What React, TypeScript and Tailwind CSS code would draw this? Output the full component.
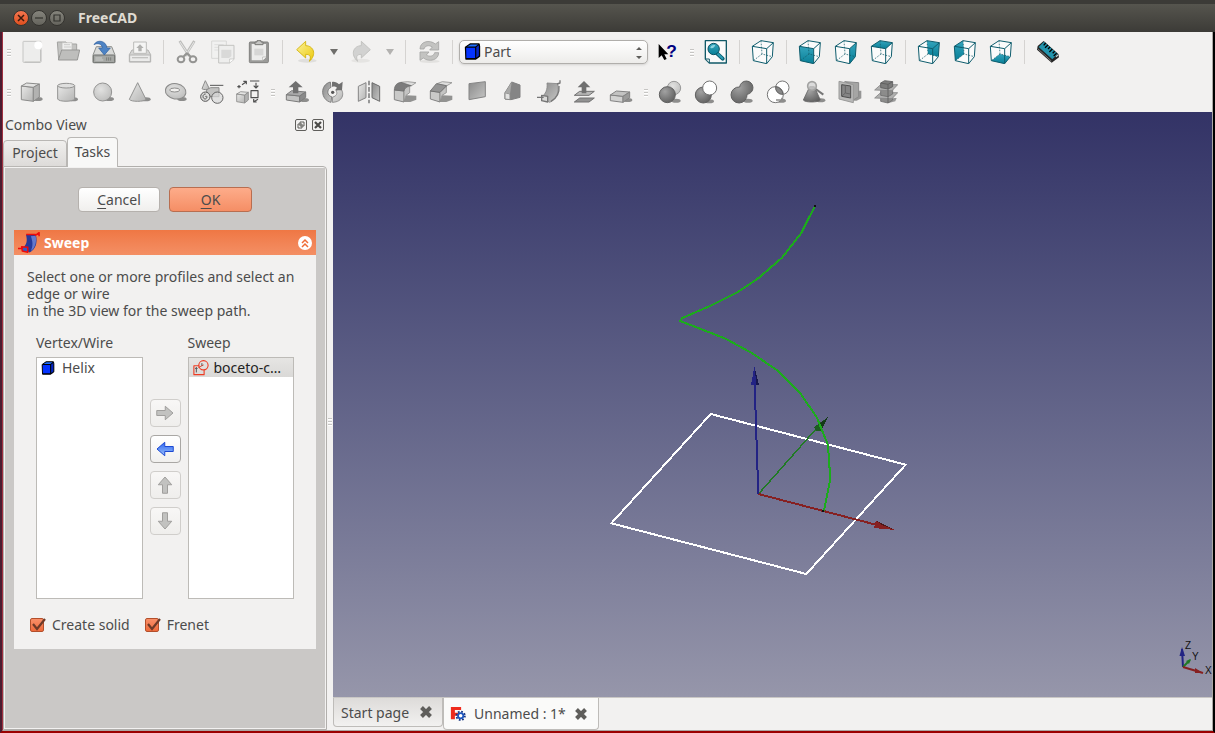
import React from 'react';

type IconProps = { children: React.ReactNode; className?: string };

function Icon({ children, className = 'size-6' }: IconProps) {
  return (
    <svg viewBox="0 0 72 72" className={`${className} shrink-0`} aria-hidden="true" strokeLinejoin="round">
      {children}
    </svg>
  );
}

// Gradients shared by all the toolbar drawings
function SharedDefs() {
  return (
    <svg className="absolute size-0" aria-hidden="true">
      <defs>
        <linearGradient id="light" x1="0" y1="0" x2="1" y2="1">
          <stop offset="0" stopColor="#e8e8e7" />
          <stop offset="1" stopColor="#b4b4b3" />
        </linearGradient>
        <linearGradient id="mid" x1="0" y1="0" x2="1" y2="1">
          <stop offset="0" stopColor="#8a8a8a" />
          <stop offset="1" stopColor="#c6c6c5" />
        </linearGradient>
        <radialGradient id="dark" cx="0.35" cy="0.3" r="0.8">
          <stop offset="0" stopColor="#a2a2a2" />
          <stop offset="1" stopColor="#5c5c5c" />
        </radialGradient>
        <radialGradient id="ball" cx="0.4" cy="0.35" r="0.7">
          <stop offset="0" stopColor="#e2e2e1" />
          <stop offset="1" stopColor="#bdbdbc" />
        </radialGradient>
        <linearGradient id="teal" x1="0" y1="0" x2="0" y2="1">
          <stop offset="0" stopColor="#35a5bd" />
          <stop offset="1" stopColor="#087f97" />
        </linearGradient>
        <linearGradient id="gold" x1="0" y1="0" x2="1" y2="1">
          <stop offset="0" stopColor="#fbf29a" />
          <stop offset="1" stopColor="#ecc90b" />
        </linearGradient>
        <linearGradient id="blueArrow" x1="0" y1="0" x2="0" y2="1">
          <stop offset="0" stopColor="#9cc2fb" />
          <stop offset="1" stopColor="#2a63f0" />
        </linearGradient>
      </defs>
    </svg>
  );
}

const Shadow = ({ x, y }: { x: number; y: number }) => <ellipse cx={x} cy={y} rx="14" ry="6" fill="#8d8d8c" />;

const cubeFaces: Record<string, string> = {
  front: '4,19 47,26 47,71 7,62',
  right: '47,26 67,8 64,50 47,71',
  top: '4,19 30,2 67,8 47,26',
  rear: '30,2 67,8 64,50 33,42',
  left: '4,19 30,2 33,42 7,62',
  bottom: '7,62 33,42 64,50 47,71',
};

function ViewCube({ face }: { face?: string }) {
  return (
    <Icon>
      <polygon points="4,19 30,2 67,8 64,50 47,71 7,62" fill="#fbfbfb" />
      {face && <polygon points={cubeFaces[face]} fill="url(#teal)" />}
      <path d="M30 2L33 42L64 50M33 42L7 62" fill="none" stroke="#125a68" strokeWidth="2.2" strokeDasharray="5 4" />
      <path
        d="M4 19L30 2L67 8L64 50L47 71L7 62ZM4 19L47 26L67 8M47 26V71"
        fill="none"
        stroke="#0f5d6d"
        strokeWidth="3"
      />
    </Icon>
  );
}

function BlueCube({ className }: { className?: string }) {
  return (
    <Icon className={className}>
      <path d="M6 18L26 4H64L66 14V56L50 68H8Z" fill="#000" stroke="#000" strokeWidth="5" />
      <path d="M9 20H47V63H10Z" fill="#0433ff" />
      <path d="M13 15L28 6H60L48 15Z" fill="#1c6dff" />
      <path d="M52 18L63 10V54L52 62Z" fill="#0426c5" />
    </Icon>
  );
}

const NewIcon = () => (
  <Icon>
    <rect x="9" y="4" width="54" height="63" rx="2" fill="#ededec" stroke="#c6c6c4" strokeWidth="3" />
    <path d="M14 66h46M62 30v34" stroke="#b0b0ae" strokeWidth="2" />
    <circle cx="55" cy="16" r="12" fill="#fff" />
  </Icon>
);
const OpenIcon = () => (
  <Icon>
    <path d="M4 6H30L34 12H62V58H8Z" fill="#c4c4c2" stroke="#a3a3a1" strokeWidth="3" />
    <path d="M18 8H48V36H18Z" fill="#efefee" stroke="#bcbcba" strokeWidth="2" />
    <path d="M24 14H42M24 21H46" stroke="#cdcdcb" strokeWidth="3" />
    <path d="M17 30H71L64 60H7Z" fill="#bebebc" stroke="#979795" strokeWidth="3" />
  </Icon>
);
const SaveIcon = () => (
  <Icon>
    <path d="M13 20H59L69 45V68H3V45Z" fill="#d9dad8" stroke="#8c8e8b" strokeWidth="3" />
    <rect x="4" y="45" width="64" height="23" rx="3" fill="#a5a7a4" stroke="#6f716e" strokeWidth="3" />
    <path d="M10 60H34M10 54H30" stroke="#d0d1cf" strokeWidth="3" />
    <path d="M44 52v10M50 52v10M56 52v10" stroke="#7c7e7b" strokeWidth="3" />
    <path d="M6 14C14 -2 42 0 45 24H55L37 45L20 24H31C30 11 16 8 6 14Z" fill="#4d83c4" stroke="#2d5e9e" strokeWidth="2" />
  </Icon>
);
const PrintIcon = () => (
  <Icon>
    <path d="M12 30H60L68 44V66H4V44Z" fill="#d5d5d4" stroke="#b1b1af" strokeWidth="3" />
    <path d="M17 6H55V40H17Z" fill="#f5f5f4" stroke="#bcbcba" strokeWidth="3" />
    <path d="M36 13L47 24H41V34H31V24H25Z" fill="#b1b1af" />
    <path d="M5 45H67V65H5Z" fill="#ebebea" stroke="#b4b4b2" strokeWidth="3" />
    <path d="M12 53H60" stroke="#c2c2c0" strokeWidth="4" />
  </Icon>
);
const CutIcon = () => (
  <Icon>
    <path d="M14 3L43 48M58 3L30 48" stroke="#bdbdbb" strokeWidth="8" />
    <path d="M15 6L42 46M57 6L32 46" stroke="#e7e7e6" strokeWidth="3" />
    <ellipse cx="18" cy="58" rx="10" ry="9" fill="none" stroke="#949492" strokeWidth="6" />
    <ellipse cx="54" cy="58" rx="10" ry="9" fill="none" stroke="#949492" strokeWidth="6" />
    <path d="M24 51L36 40L48 51" fill="none" stroke="#949492" strokeWidth="6" />
  </Icon>
);
const CopyIcon = () => (
  <Icon>
    <rect x="2" y="3" width="44" height="52" fill="#f1f1f0" stroke="#d8d8d6" strokeWidth="3" />
    <path d="M10 14H38M10 22H38M10 30H24" stroke="#dededd" strokeWidth="3" />
    <path d="M23 16H69V58L56 69H23Z" fill="#eeeeed" stroke="#c3c3c1" strokeWidth="3" />
    <path d="M31 29H61V49L54 54H31Z" fill="#d9d9d8" />
    <path d="M56 69V57H69" fill="#fff" stroke="#bcbcba" strokeWidth="2" />
  </Icon>
);
const PasteIcon = () => (
  <Icon>
    <rect x="7" y="6" width="57" height="62" rx="3" fill="#9b9b99" stroke="#80807e" strokeWidth="3" />
    <path d="M14 12H57V52L47 61H14Z" fill="#ececeb" />
    <path d="M22 26H49V46H22Z" fill="#d6d6d5" />
    <path d="M47 61V51H57" fill="#fff" stroke="#aaaaa8" strokeWidth="2" />
    <path d="M24 14V6H30V2H42V6H48V14Z" fill="#c5c5c3" stroke="#777775" strokeWidth="3" />
  </Icon>
);
const UndoIcon = () => (
  <Icon>
    <ellipse cx="40" cy="62" rx="28" ry="6" fill="#dfdedc" />
    <path d="M8 29L35 4V17C59 17 69 44 46 64C53 48 47 43 35 43V54Z" fill="url(#gold)" stroke="#d1b000" strokeWidth="2.5" />
  </Icon>
);
const RedoIcon = () => (
  <Icon>
    <ellipse cx="32" cy="62" rx="28" ry="6" fill="#e5e4e2" />
    <path d="M61 29L34 4V17C10 17 0 44 23 64C16 48 22 43 34 43V54Z" fill="#d2d2d1" stroke="#bdbdbb" strokeWidth="2.5" />
  </Icon>
);
const RefreshIcon = () => (
  <Icon>
    <ellipse cx="38" cy="64" rx="30" ry="5" fill="#e2e1df" />
    <g fill="#c3c3c1" stroke="#a5a5a3" strokeWidth="2.5">
      <path d="M9 27C9 4 38 -2 55 12L65 5V30H38L46 21C36 14 23 17 21 27Z" />
      <path d="M65 38C65 61 36 67 19 54L9 61V36H36L28 45C38 52 51 48 53 38Z" />
    </g>
  </Icon>
);
const WhatsThisIcon = () => (
  <Icon>
    <path d="M11 12V54L20 46L28 60L35 57L28 43H40Z" fill="#000" />
    <text x="34" y="51" fontSize="52" fontWeight="700" fill="#000080" fontFamily="Liberation Sans, sans-serif">
      ?
    </text>
  </Icon>
);
const FitIcon = () => (
  <Icon>
    <path d="M4 2H67V69H16L4 57Z" fill="#fafafa" stroke="#125a68" strokeWidth="4" />
    <path d="M4 57H16V69Z" fill="#fff" stroke="#125a68" strokeWidth="3" />
    <path d="M39 40L56 56" stroke="#0a6073" strokeWidth="12" strokeLinecap="round" />
    <path d="M39 40L55 55" stroke="#2a9db5" strokeWidth="6" strokeLinecap="round" />
    <circle cx="29" cy="27" r="17" fill="url(#teal)" stroke="#0b5162" strokeWidth="3" />
    <path d="M19 24C20 16 28 14 34 16C30 24 26 26 19 24Z" fill="#8ed4e0" />
  </Icon>
);
const RulerIcon = () => (
  <Icon>
    <path d="M23 3L67 42L69 52L47 68L3 29L5 18Z" fill="#242424" />
    <path d="M24 5L65 42L49 58L8 21Z" fill="#2294ad" />
    <path d="M29 9L23 16M36 15L27 23M42 21L36 27M49 27L40 36M56 34L50 40M62 40L53 48" stroke="#000" strokeWidth="4" />
    <path d="M5 26L46 63" stroke="#777" strokeWidth="3" />
    <path d="M60 50L66 45" stroke="#ccc" strokeWidth="4" />
  </Icon>
);

const BoxIcon = () => (
  <Icon>
    <Shadow x={54} y={57} />
    <g stroke="#8b8b8a" strokeWidth="3">
      <path d="M4 18L40 22V64L4 59Z" fill="url(#light)" />
      <path d="M4 18L20 9L58 12L40 22Z" fill="#e3e3e2" />
      <path d="M40 22L58 12V51L40 64Z" fill="#b2b2b1" />
    </g>
  </Icon>
);
const CylinderIcon = () => (
  <Icon>
    <Shadow x={52} y={58} />
    <path d="M5 17V57C8 66 52 66 56 57V17" fill="url(#light)" stroke="#939392" strokeWidth="3" />
    <ellipse cx="30.500" cy="17" rx="25.500" ry="7" fill="#dfdfde" stroke="#939392" strokeWidth="3" />
  </Icon>
);
const SphereIcon = () => (
  <Icon>
    <Shadow x={52} y={57} />
    <circle cx="32" cy="36" r="27" fill="url(#ball)" stroke="#939392" strokeWidth="3" />
  </Icon>
);
const ConeIcon = () => (
  <Icon>
    <Shadow x={54} y={58} />
    <path d="M29 8L4 58C8 66 50 66 54 58Z" fill="url(#light)" stroke="#939392" strokeWidth="3" />
  </Icon>
);
const TorusIcon = () => (
  <Icon>
    <Shadow x={54} y={57} />
    <ellipse cx="35" cy="34" rx="31" ry="23" fill="url(#ball)" stroke="#8b8b8a" strokeWidth="3" transform="rotate(10 35 34)" />
    <ellipse cx="32" cy="30" rx="15" ry="6" fill="#f1f0ee" stroke="#8b8b8a" strokeWidth="3" />
  </Icon>
);
const PrimitivesIcon = () => (
  <Icon>
    <path d="M16 2L6 26C10 30 24 30 28 26Z" fill="url(#light)" stroke="#8b8b8a" strokeWidth="3" />
    <path d="M30 16H70" stroke="#555" strokeWidth="3" />
    <path d="M20 29L32 23H57V50H20Z" fill="#c2c2c1" stroke="#8b8b8a" strokeWidth="3" />
    <circle cx="52" cy="53" r="17" fill="#d9d9d8" fillOpacity="0.7" stroke="#666" strokeWidth="3" />
    <circle cx="16" cy="50" r="14" fill="#dededd" stroke="#555" strokeWidth="3" />
    <path d="M16 50C20 44 24 54 16 57C7 57 6 42 17 42" fill="none" stroke="#555" strokeWidth="3" />
  </Icon>
);
const BuilderIcon = () => (
  <Icon>
    <g stroke="#8b8b8a" strokeWidth="2.500">
      <path d="M2 42L26 45V69L2 65Z" fill="url(#light)" />
      <path d="M2 42L14 35L37 37L26 45Z" fill="#e3e3e2" />
      <path d="M26 45L37 37V60L26 69Z" fill="#b2b2b1" />
    </g>
    <g fill="none" stroke="#4f4f4f" strokeWidth="3.500">
      <path d="M42 3H70M60 8V22M53 17L60 24L67 17M4 20H14M9 15V25M18 14L30 6M22 4H31V13M66 58L52 66M53 57V66H62" />
      <rect x="45" y="32" width="21" height="21" />
    </g>
  </Icon>
);
const ExtrudeIcon = () => (
  <Icon>
    <Shadow x={58} y={60} />
    <g stroke="#7b7b7b" strokeWidth="3">
      <path d="M4 44L44 48V66L4 60Z" fill="#c2c2c1" />
      <path d="M4 44L20 32L62 36L44 48Z" fill="#aaa" />
      <path d="M44 48L62 36V52L44 66Z" fill="#8a8a8a" />
    </g>
    <path d="M32 3L53 22H40V40H24V22H11Z" fill="#707070" />
  </Icon>
);
const RevolveIcon = () => (
  <Icon>
    <path d="M28 6C-4 14 -2 60 30 67L32 50C18 48 16 28 30 22Z" fill="url(#mid)" stroke="#707070" strokeWidth="2.500" />
    <path d="M34 67C66 66 72 40 58 24L45 32C51 40 46 49 35 51Z" fill="url(#light)" stroke="#838383" strokeWidth="2.500" />
    <path d="M33 6C40 4 48 7 54 13L65 5L63 31H42L48 23C44 20 38 18 33 21Z" fill="#707070" />
    <circle cx="35" cy="37" r="5" fill="#555" />
  </Icon>
);
const MirrorIcon = () => (
  <Icon>
    <path d="M4 19L27 8V53L4 64Z" fill="url(#light)" stroke="#858585" strokeWidth="3" />
    <path d="M45 8L68 19V64L45 53Z" fill="url(#mid)" stroke="#6b6b6b" strokeWidth="3" />
    <path d="M36 2V70" stroke="#858585" strokeWidth="5" strokeDasharray="14 5" />
  </Icon>
);
const FilletIcon = () => (
  <Icon>
    <path d="M34 62L40 46L70 47V59L52 66H34Z" fill="#929291" />
    <path d="M4 30L33 33V66L4 59Z" fill="#c9c9c8" stroke="#838383" strokeWidth="3" />
    <path d="M33 33C34 25 40 21 50 19V38L39 46L33 66Z" fill="#c4c4c3" stroke="#8b8b8a" strokeWidth="2.500" />
    <path d="M24 7L44 5L69 8L54 18L28 14Z" fill="#dededd" stroke="#939392" strokeWidth="2.500" />
    <path d="M4 30C4 17 12 8 24 7L55 17C42 18 34 23 33 33Z" fill="#7c7c7c" stroke="#6a6a6a" strokeWidth="2" />
  </Icon>
);
const ChamferIcon = () => (
  <Icon>
    <path d="M34 62L40 46L70 47V59L52 66H34Z" fill="#929291" />
    <path d="M4 33L33 37V66L4 57Z" fill="#c9c9c8" stroke="#838383" strokeWidth="3" />
    <path d="M33 37L52 18V38L39 46L33 66Z" fill="#c4c4c3" stroke="#8b8b8a" strokeWidth="2.500" />
    <path d="M24 11L40 5L69 8L52 18Z" fill="#dededd" stroke="#939392" strokeWidth="2.500" />
    <path d="M4 33L22 11L53 17L33 37Z" fill="#949494" stroke="#6c6c6c" strokeWidth="2.500" />
  </Icon>
);
const FaceIcon = () => (
  <Icon>
    <path d="M12 11L61 5V50L12 59Z" fill="url(#mid)" stroke="#858585" strokeWidth="3" />
  </Icon>
);
const LoftIcon = () => (
  <Icon>
    <path d="M32 6L57 15V52L30 59L12 57V38Z" fill="#858585" stroke="#808080" strokeWidth="3" />
    <path d="M12 38L27 42V59L12 57Z" fill="#e2e2e1" stroke="#8b8b8a" strokeWidth="3" />
    <path d="M32 6L27 42L12 38Z" fill="#a8a8a7" />
  </Icon>
);
const SweepIcon = () => (
  <Icon>
    <path d="M30 9L62 11C68 36 58 58 38 67L12 52C26 42 32 30 30 9Z" fill="url(#mid)" stroke="#858585" strokeWidth="2.500" />
    <path d="M60 12L69 9V1M66 18C68 40 56 56 42 64" fill="none" stroke="#777" strokeWidth="4" />
    <path d="M14 46L32 49V66L14 62ZM0 52H20" fill="#d9d9d8" stroke="#757575" strokeWidth="4" />
  </Icon>
);
const OffsetIcon = () => (
  <Icon>
    <path d="M4 66L20 54H64L48 66Z" fill="#929292" stroke="#707070" strokeWidth="3" />
    <path d="M4 46L20 34H64L48 46Z" fill="#b8b8b7" stroke="#707070" strokeWidth="3" />
    <path d="M33 3L52 22H40V40H26V22H14Z" fill="#707070" />
  </Icon>
);
const ThicknessIcon = () => (
  <Icon>
    <Shadow x={56} y={60} />
    <g stroke="#838383" strokeWidth="3">
      <path d="M4 45L42 49V67L4 62Z" fill="#d2d2d1" />
      <path d="M4 45L22 33L62 36L42 49Z" fill="#c3c3c2" />
      <path d="M42 49L62 36V53L42 67Z" fill="#9a9a99" />
    </g>
  </Icon>
);
const BooleanIcon = () => (
  <Icon>
    <Shadow x={54} y={62} />
    <circle cx="48" cy="24" r="20" fill="url(#ball)" stroke="#999" strokeWidth="3" />
    <circle cx="28" cy="44" r="24" fill="url(#dark)" stroke="#606060" strokeWidth="3" />
  </Icon>
);
const SubtractIcon = () => (
  <Icon>
    <Shadow x={46} y={64} />
    <circle cx="28" cy="45" r="24" fill="url(#dark)" stroke="#606060" strokeWidth="3" />
    <circle cx="47" cy="24" r="21" fill="#fff" stroke="#727272" strokeWidth="3" />
  </Icon>
);
const UnionIcon = () => (
  <Icon>
    <Shadow x={54} y={62} />
    <path d="M29 21A20 20 0 1 1 51 43A24 24 0 1 1 29 21Z" fill="url(#dark)" stroke="#606060" strokeWidth="3" />
  </Icon>
);
const CommonIcon = () => (
  <Icon>
    <Shadow x={46} y={62} />
    <circle cx="49" cy="23" r="20" fill="#fff" stroke="#757575" strokeWidth="3" />
    <circle cx="28" cy="44" r="24" fill="#fff" stroke="#757575" strokeWidth="3" />
    <path d="M29 20A20 20 0 0 0 51 43A24 24 0 0 0 29 20Z" fill="#888" stroke="#606060" strokeWidth="3" />
    <path d="M30 60H54L46 54" fill="none" stroke="#8d8d8c" strokeWidth="4" />
  </Icon>
);
const CheckIcon = () => (
  <Icon>
    <Shadow x={56} y={61} />
    <path d="M23 20H37L55 60C50 68 8 68 4 60Z" fill="url(#dark)" stroke="#686868" strokeWidth="2.500" />
    <path d="M41 27L64 44" stroke="#777" strokeWidth="6" />
    <circle cx="30" cy="18" r="13" fill="#d2d2d1" fillOpacity="0.7" stroke="#a2a2a1" strokeWidth="5" />
  </Icon>
);
const SectionIcon = () => (
  <Icon>
    <path d="M48 32H70V55L56 62H44Z" fill="#969695" />
    <path d="M20 5L62 8V50L46 60V16Z" fill="#a5a5a4" stroke="#8a8a8a" strokeWidth="3" />
    <path d="M3 4L46 14V68L3 57Z" fill="#b9b9b8" stroke="#9a9a99" strokeWidth="3" />
    <path d="M11 14L38 18V54L11 49Z" fill="#858585" stroke="#4e4e4e" strokeWidth="3" />
    <path d="M12 48L22 39V17M22 39L37 42" fill="none" stroke="#666" strokeWidth="3" />
  </Icon>
);
const CrossSectionsIcon = () => (
  <Icon>
    <path d="M42 62L60 54H68L64 64L44 69Z" fill="#999" />
    <path d="M20 44V64L42 69L56 60V44Z" fill="#8c8c8b" stroke="#6d6d6d" strokeWidth="2.500" />
    <path d="M2 54L20 38H71L54 56Z" fill="#b0b0af" stroke="#858585" strokeWidth="2.500" />
    <path d="M20 26V46L42 50L56 42V26Z" fill="#8c8c8b" stroke="#6d6d6d" strokeWidth="2.500" />
    <path d="M2 30L20 14H71L54 32Z" fill="#b0b0af" stroke="#858585" strokeWidth="2.500" />
    <path d="M20 9L32 2L56 5V20L42 27L20 23Z" fill="#7c7c7b" stroke="#5c5c5c" strokeWidth="2.500" />
    <path d="M20 9L42 13V69M42 13L56 5" fill="none" stroke="#5c5c5c" strokeWidth="2.500" />
  </Icon>
);

function Grip() {
  return (
    <div className="flex w-[13px] shrink-0 justify-center first:w-[11px]" aria-hidden="true">
      <svg viewBox="0 0 4 9" className="h-[9px] w-1" shapeRendering="crispEdges">
        <path d="M0 1H4M0 4H4M0 7H4" stroke="#c6c5c3" />
        <path d="M0 2H4M0 5H4M0 8H4" stroke="#fff" />
      </svg>
    </div>
  );
}

const Sep = () => (
  <div className="flex w-[11px] shrink-0 justify-center">
    <div className="h-6 w-px bg-[#d5d3d1]" />
  </div>
);

function Tool({ label, children }: { label: string; children: React.ReactNode }) {
  return (
    <button aria-label={label} className="flex h-9 w-9 shrink-0 items-center justify-center">
      {children}
    </button>
  );
}

function DropArrow({ label, className }: { label: string; className: string }) {
  return (
    <button aria-label={label} className={`flex h-9 w-5 shrink-0 items-center justify-center ${className}`}>
      <svg viewBox="0 0 8 6" className="h-[6px] w-2 fill-current">
        <path d="M0 0H8L4 6Z" />
      </svg>
    </button>
  );
}

const partTools: [string, React.ComponentType][][] = [
  [
    ['Box', BoxIcon],
    ['Cylinder', CylinderIcon],
    ['Sphere', SphereIcon],
    ['Cone', ConeIcon],
    ['Torus', TorusIcon],
    ['Create primitives', PrimitivesIcon],
    ['Shape builder', BuilderIcon],
  ],
  [
    ['Extrude', ExtrudeIcon],
    ['Revolve', RevolveIcon],
    ['Mirror', MirrorIcon],
    ['Fillet', FilletIcon],
    ['Chamfer', ChamferIcon],
    ['Ruled surface', FaceIcon],
    ['Loft', LoftIcon],
    ['Sweep', SweepIcon],
    ['Offset', OffsetIcon],
    ['Thickness', ThicknessIcon],
  ],
  [
    ['Boolean', BooleanIcon],
    ['Cut', SubtractIcon],
    ['Union', UnionIcon],
    ['Intersection', CommonIcon],
    ['Check geometry', CheckIcon],
    ['Section', SectionIcon],
    ['Cross-sections', CrossSectionsIcon],
  ],
];

function Toolbars() {
  return (
    <header className="shrink-0">
      <div className="flex h-10 items-center">
        <Grip />
        <Tool label="New"><NewIcon /></Tool>
        <Tool label="Open"><OpenIcon /></Tool>
        <Tool label="Save"><SaveIcon /></Tool>
        <Tool label="Print"><PrintIcon /></Tool>
        <Sep />
        <Tool label="Cut selection"><CutIcon /></Tool>
        <Tool label="Copy"><CopyIcon /></Tool>
        <Tool label="Paste"><PasteIcon /></Tool>
        <Sep />
        <Tool label="Undo"><UndoIcon /></Tool>
        <DropArrow label="Undo history" className="text-[#6f6e6b]" />
        <Tool label="Redo"><RedoIcon /></Tool>
        <DropArrow label="Redo history" className="text-[#b3b2b0]" />
        <Sep />
        <Tool label="Refresh"><RefreshIcon /></Tool>
        <Sep />
        <div className="relative mx-px h-6 w-[189px] shrink-0">
          <select
            aria-label="Workbench"
            className="h-full w-full appearance-none rounded-[5px] border border-[#b0aeab] bg-linear-to-b from-white to-[#edecea] pl-6 text-sm leading-5 shadow-sm"
          >
            <option>Part</option>
          </select>
          <BlueCube className="absolute left-[5px] top-[3px] size-[17px]" />
          <svg viewBox="0 0 8 14" className="absolute right-[5px] top-[6px] h-[14px] w-2 fill-[#5e5d5a]">
            <path d="M1 4H7L4 1ZM1 10H7L4 13Z" />
          </svg>
        </div>
        <Tool label="What's this"><WhatsThisIcon /></Tool>
        <Grip />
        <Tool label="Fit all"><FitIcon /></Tool>
        <Sep />
        <Tool label="Axonometric"><ViewCube /></Tool>
        <Sep />
        <Tool label="Front"><ViewCube face="front" /></Tool>
        <Tool label="Right"><ViewCube face="right" /></Tool>
        <Tool label="Top"><ViewCube face="top" /></Tool>
        <Sep />
        <Tool label="Rear"><ViewCube face="rear" /></Tool>
        <Tool label="Left"><ViewCube face="left" /></Tool>
        <Tool label="Bottom"><ViewCube face="bottom" /></Tool>
        <Sep />
        <Tool label="Measure distance"><RulerIcon /></Tool>
      </div>
      <div className="flex h-10 items-center">
        {partTools.map((group, i) => (
          <React.Fragment key={i}>
            <Grip />
            {group.map(([label, Drawing]) => (
              <Tool key={label} label={label}>
                <Drawing />
              </Tool>
            ))}
          </React.Fragment>
        ))}
      </div>
    </header>
  );
}

const windowButton = 'flex size-4 items-center justify-center rounded-full border border-[#34332f]';

function TitleBar() {
  return (
    <div className="flex h-8 shrink-0 items-center gap-[2px] border-t-4 border-[#3c3b37] bg-linear-to-b from-[#56554e] to-[#3c3b37] pl-[13px]">
      <button aria-label="Close" className={`${windowButton} bg-linear-to-b from-[#f4754e] to-[#df4f1c]`}>
        <svg viewBox="0 0 8 8" className="size-2 stroke-[#3a1a0e]"><path d="M1 1L7 7M7 1L1 7" strokeWidth="1.500" /></svg>
      </button>
      <button aria-label="Minimize" className={`${windowButton} bg-linear-to-b from-[#85847c] to-[#65645d]`}>
        <svg viewBox="0 0 8 8" className="size-2 stroke-[#33322e]"><path d="M0 4H8" strokeWidth="1.200" /></svg>
      </button>
      <button aria-label="Maximize" className={`${windowButton} bg-linear-to-b from-[#85847c] to-[#65645d]`}>
        <svg viewBox="0 0 8 8" className="size-2 fill-none stroke-[#33322e]"><path d="M1 1H7V7H1Z" strokeWidth="1.200" /></svg>
      </button>
      <h1 className="ml-[11px] text-sm font-bold text-[#dfdbd2]">FreeCAD</h1>
    </div>
  );
}

const SweepLogo = () => (
  <Icon className="size-[22px]">
    <path d="M26 8L58 8C66 36 56 58 38 67L14 54C28 42 32 30 26 8Z" fill="#26399a" />
    <path d="M42 14L58 12C62 36 54 54 42 62C50 46 48 30 42 14Z" fill="#6578cc" />
    <path d="M27 8H58M56 12L69 2V14" fill="none" stroke="#f00a0a" strokeWidth="5" />
    <path d="M12 48L32 50V66L14 62ZM0 54H16" fill="#3b57bd" stroke="#f00a0a" strokeWidth="5" />
  </Icon>
);

const SketchIcon = () => (
  <Icon className="size-4">
    <g fill="none" stroke="#ee3b22" strokeWidth="5">
      <path d="M28 26H4V66H50V42" />
      <circle cx="47" cy="24" r="21" />
      <path d="M24 34L48 22" strokeWidth="4" />
    </g>
    <path d="M15 34V56M10 40L15 34L20 40M40 14V26" fill="none" stroke="#444" strokeWidth="4" />
  </Icon>
);

const arrows = [
  { label: 'Add to sweep', rotate: 'rotate-0', active: false },
  { label: 'Remove from sweep', rotate: 'rotate-180', active: true },
  { label: 'Move up', rotate: '-rotate-90', active: false },
  { label: 'Move down', rotate: 'rotate-90', active: false },
];

function ArrowButtons() {
  return (
    <div className="flex shrink-0 flex-col gap-2">
      {arrows.map((a) => (
        <button
          key={a.label}
          aria-label={a.label}
          className={`flex h-7 w-[31px] items-center justify-center rounded border bg-linear-to-b ${
            a.active ? 'border-[#a9a7a4] from-white to-[#f1f0ee]' : 'border-[#d0cecb] from-[#f8f7f6] to-[#efeeec]'
          }`}
        >
          <Icon className={`size-[18px] ${a.rotate}`}>
            <path
              d="M3 26H37V9L68 36L37 63V46H3Z"
              fill={a.active ? 'url(#blueArrow)' : '#c2c2c0'}
              stroke={a.active ? '#1c49d2' : '#a09f9d'}
              strokeWidth="4"
            />
          </Icon>
        </button>
      ))}
    </div>
  );
}

function Check({ label }: { label: string }) {
  return (
    <label className="flex items-center gap-2">
      <span className="relative size-[14px]">
        <input
          type="checkbox"
          defaultChecked
          className="peer block size-[14px] appearance-none rounded-[2px] border border-[#b34f2b] bg-[#e9e8e6] checked:bg-linear-to-b checked:from-[#f98f68] checked:to-[#ee6a3a]"
        />
        <svg viewBox="0 0 16 16" className="pointer-events-none absolute -top-px left-0 hidden size-4 peer-checked:block">
          <path d="M3 7L7 12L15 2" fill="none" stroke="#6e3a28" strokeWidth="2.200" />
        </svg>
      </span>
      {label}
    </label>
  );
}

function ItemList({ title, className, children }: { title: string; className: string; children: React.ReactNode }) {
  return (
    <section className="min-w-0 flex-1">
      <h3 className="h-[17px]">{title}</h3>
      <ul aria-label={title} className="mt-[6px] h-[242px] border border-[#bdbbb7] bg-white">
        <li className={`flex h-[19px] items-center gap-[5px] px-1 ${className}`}>{children}</li>
      </ul>
    </section>
  );
}

function SweepTask() {
  return (
    <section className="mt-[18px] bg-[#f2f1f0]">
      <div className="flex h-[25px] items-center bg-linear-to-b from-[#ef7744] to-[#f48f64] px-1 font-bold text-white">
        <SweepLogo />
        <h2 className="ml-1 flex-1">Sweep</h2>
        <button aria-label="Collapse" className="flex size-[14px] items-center justify-center rounded-full bg-white">
          <svg viewBox="0 0 10 10" className="size-[10px] fill-none stroke-[#ef6c36]" strokeWidth="1.500">
            <path d="M2 5L5 2L8 5M2 9L5 6L8 9" />
          </svg>
        </button>
      </div>
      <div className="px-[13px] pb-4 pt-[13px]">
        <p>
          Select one or more profiles and select an edge or wire
          <br />
          in the 3D view for the sweep path.
        </p>
        <div className="ml-[9px] mr-[9px] mt-[15px] flex items-start gap-[7px]">
          <ItemList title="Vertex/Wire" className="">
            <BlueCube className="size-[14px]" />
            <span className="ml-[2px]">Helix</span>
          </ItemList>
          <div className="mt-[65px]">
            <ArrowButtons />
          </div>
          <ItemList title="Sweep" className="bg-linear-to-b from-[#e6e5e3] to-[#dad9d7] text-[#222]">
            <SketchIcon />
            <span>boceto-c…</span>
          </ItemList>
        </div>
        <div className="ml-[3px] mt-[17px] flex gap-[15px]">
          <Check label="Create solid" />
          <Check label="Frenet" />
        </div>
      </div>
    </section>
  );
}

function ComboView() {
  return (
    <aside className="flex w-[324px] shrink-0 flex-col">
      <div className="flex h-[25px] items-center gap-[5px] pl-[2px] pr-[3px]">
        <h2 className="flex-1">Combo View</h2>
        <button aria-label="Float" className="size-3 rounded-[2px] border border-[#5f5e5b]">
          <svg viewBox="0 0 10 10" className="fill-none stroke-[#5f5e5b]"><path d="M4 2H8V6H4ZM2 4H6V8H2Z" /></svg>
        </button>
        <button aria-label="Close panel" className="size-3 rounded-[2px] border border-[#5f5e5b]">
          <svg viewBox="0 0 10 10" className="stroke-[#4c4b48]"><path d="M2 2L8 8M8 2L2 8" strokeWidth="2.200" /></svg>
        </button>
      </div>
      <div role="tablist" className="relative z-10 -mb-px flex items-end">
        <button role="tab" aria-selected="false" className="h-[27px] w-16 rounded-t border border-[#b9b7b4] bg-linear-to-b from-[#f0efed] to-[#dddbd9] pb-[2px]">
          Project
        </button>
        <button role="tab" aria-selected="true" className="h-[30px] w-[51px] rounded-t border border-b-0 border-[#b9b7b4] bg-[#f8f8f7] pb-[2px]">
          Tasks
        </button>
      </div>
      <div className="flex-1 rounded-tr border border-[#b1afac] p-px">
        <div className="h-full bg-[#cac8c6] px-[9px] pt-[19px]">
          <div className="flex justify-center gap-[9px]">
            <button className="h-[25px] w-[82px] rounded border border-[#b5b1ad] bg-linear-to-b from-white to-[#f0efed]">
              <span className="underline underline-offset-[3px]">C</span>ancel
            </button>
            <button className="h-[25px] w-[83px] rounded border border-[#b86e50] bg-linear-to-b from-[#fdac8a] to-[#f58e65]">
              <span className="underline underline-offset-[3px]">O</span>K
            </button>
          </div>
          <SweepTask />
        </div>
      </div>
    </aside>
  );
}

function Scene() {
  return (
    <div className="relative min-h-0 flex-1 overflow-hidden bg-linear-to-b from-[#333366] to-[#9696aa]">
      <svg viewBox="333 112 879 585" className="absolute inset-0 size-full" shapeRendering="crispEdges" fill="none">
        <path d="M710.700 414L905.700 464.700L806.300 574L611.300 523.300Z" stroke="#fff" strokeWidth="2" />
        <path d="M758.500 494L816 429" stroke="#217a25" strokeWidth="1.500" />
        <path d="M827.700 417.300L814 427L816 431L821 431Z" fill="#1c5d20" />
        <path d="M827.700 417.300L821 431L819 424Z" fill="#143a18" />
        <path d="M758.500 494L877 525" stroke="#862021" strokeWidth="2" />
        <path d="M895.500 530L876 520.500L874 528Z" fill="#862021" />
        <path d="M895.500 530L876 520.500L882 525Z" fill="#4d1718" />
        <path d="M758.300 494L754.700 385" stroke="#232384" strokeWidth="2" />
        <path d="M754.400 366.500L751 385H759Z" fill="#232384" />
        <path d="M754.400 366.500L756.500 385H759Z" fill="#18184f" />
        <path
          d="M815 206L801 233.300L782 257.700L759 277.700L736.700 292.700L712.300 305L682.300 318L680.300 321L700.700 329L724.700 338.300L751.300 352.700L776.700 370L801 394.300L817 417.700L828 445L830.300 479.300L824 510.700"
          stroke="#1cab1c"
          strokeWidth="2"
        />
        <path d="M814 205h2v2h-2ZM822 510h2v2h-2Z" fill="#111" />
      </svg>
      {/* orientation cross in the corner */}
      <svg viewBox="0 0 34 36" className="absolute bottom-[20px] right-0 h-9 w-[34px]" fill="none">
        <path d="M5 26L4 8" stroke="#232384" strokeWidth="2" />
        <path d="M4 6L1.500 15H7Z" fill="#232384" />
        <path d="M5 26L12 19" stroke="#217a25" strokeWidth="2" />
        <path d="M13 18L8 20L11 23Z" fill="#217a25" />
        <path d="M5 26L25 32" stroke="#862021" strokeWidth="2" />
        <path d="M25 32L17 27V32Z" fill="#862021" />
        <g fill="#111" fontSize="10" fontFamily="Liberation Sans, sans-serif">
          <text x="7" y="8">Z</text>
          <text x="14" y="19">Y</text>
          <text x="27" y="33">X</text>
        </g>
      </svg>
    </div>
  );
}

const CloseMark = () => (
  <svg viewBox="0 0 12 12" className="size-3 stroke-[#5f5e5b]" strokeWidth="4">
    <path d="M1.500 1.500L10.500 10.500M10.500 1.500L1.500 10.500" />
  </svg>
);

const FreeCadLogo = () => (
  <Icon className="size-4">
    <path d="M4 4H50V18H22V30H38V44H22V60H4Z" fill="#ef2b1d" />
    <circle cx="48" cy="44" r="19" fill="none" stroke="#14327f" strokeWidth="8" strokeDasharray="7.500 7.420" />
    <circle cx="48" cy="44" r="12" fill="#fff" stroke="#1d55bd" strokeWidth="8" />
  </Icon>
);

function DocumentTabs() {
  return (
    <div role="tablist" className="flex h-[33px] shrink-0 items-start border-t border-[#c9c7c5]">
      <div className="flex h-[29px] w-[110px] items-center justify-between rounded-b border border-t-0 border-[#bebcb9] bg-linear-to-b from-[#dddbd9] to-[#f2f1f0] pl-[7px] pr-[10px]">
        <button role="tab" aria-selected="false" className="whitespace-nowrap">Start page</button>
        <button aria-label="Close Start page"><CloseMark /></button>
      </div>
      <div className="flex h-8 w-[156px] items-center rounded-b border border-t-0 border-[#bebcb9] bg-[#fafaf9] pl-[6px] pr-[11px]">
        <FreeCadLogo />
        <button role="tab" aria-selected="true" className="ml-2 flex-1 whitespace-nowrap text-left">Unnamed : 1*</button>
        <button aria-label="Close Unnamed"><CloseMark /></button>
      </div>
    </div>
  );
}

export default function App() {
  return (
    <div className="flex min-h-screen flex-col bg-[#3c3b37] font-['Noto_Sans','Open_Sans',sans-serif] text-sm leading-[17px] text-[#4c4c4c]">
      <SharedDefs />
      <TitleBar />
      <div className="flex flex-1 border-b-2 border-l-2 border-r-2 border-b-[#9b0000] border-l-[#4a1c30] border-r-black">
        <div className="flex min-w-0 flex-1 flex-col border-b border-l border-r border-b-[#aaa8a4] border-l-[#a03040] border-r-[#aaa8a4] bg-[#f2f1f0]">
          <Toolbars />
          <div className="flex flex-1">
            <ComboView />
            <div className="flex w-[6px] shrink-0 items-center justify-center">
              <Grip />
            </div>
            <main className="flex min-w-0 flex-1 flex-col">
              <Scene />
              <DocumentTabs />
            </main>
          </div>
        </div>
      </div>
    </div>
  );
}
